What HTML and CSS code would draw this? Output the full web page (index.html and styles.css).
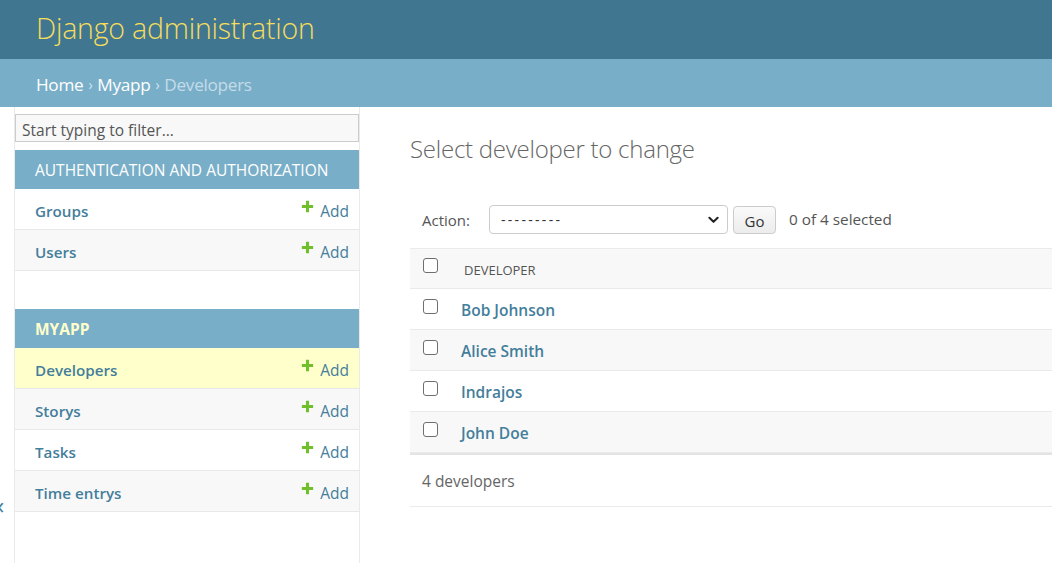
FILE: index.html
```html
<!DOCTYPE html>
<html lang="en">
<head>
<meta charset="utf-8">
<title>Select developer to change | Django site admin</title>
<link rel="stylesheet" href="styles.css">
</head>
<body>
<header class="header">
  <h1 class="site-name">Django administration</h1>
</header>
<nav class="breadcrumbs">
  <a href="#" class="crumb">Home</a><span class="sep">›</span><a href="#" class="crumb">Myapp</a><span class="sep">›</span><span class="current">Developers</span>
</nav>
<div class="main">
  <div class="toggle"><span class="toggle-glyph">‹</span></div>
  <aside class="sidebar">
    <input class="nav-filter" type="search" placeholder="Start typing to filter...">
    <section class="module">
      <div class="caption">Authentication and Authorization</div>
      <div class="row"><a href="#" class="model">Groups</a><a href="#" class="add"><svg class="plus" viewBox="0 0 12 12"><path d="M4.6 0.8h2.8v3.8h3.8v2.8h-3.8v3.8h-2.8v-3.8h-3.8v-2.8h3.8z" fill="#70bf2b"/></svg>Add</a></div>
      <div class="row alt"><a href="#" class="model">Users</a><a href="#" class="add"><svg class="plus" viewBox="0 0 12 12"><path d="M4.6 0.8h2.8v3.8h3.8v2.8h-3.8v3.8h-2.8v-3.8h-3.8v-2.8h3.8z" fill="#70bf2b"/></svg>Add</a></div>
    </section>
    <section class="module">
      <div class="caption current-app">Myapp</div>
      <div class="row current"><a href="#" class="model">Developers</a><a href="#" class="add"><svg class="plus" viewBox="0 0 12 12"><path d="M4.6 0.8h2.8v3.8h3.8v2.8h-3.8v3.8h-2.8v-3.8h-3.8v-2.8h3.8z" fill="#70bf2b"/></svg>Add</a></div>
      <div class="row alt"><a href="#" class="model">Storys</a><a href="#" class="add"><svg class="plus" viewBox="0 0 12 12"><path d="M4.6 0.8h2.8v3.8h3.8v2.8h-3.8v3.8h-2.8v-3.8h-3.8v-2.8h3.8z" fill="#70bf2b"/></svg>Add</a></div>
      <div class="row"><a href="#" class="model">Tasks</a><a href="#" class="add"><svg class="plus" viewBox="0 0 12 12"><path d="M4.6 0.8h2.8v3.8h3.8v2.8h-3.8v3.8h-2.8v-3.8h-3.8v-2.8h3.8z" fill="#70bf2b"/></svg>Add</a></div>
      <div class="row alt"><a href="#" class="model">Time entrys</a><a href="#" class="add"><svg class="plus" viewBox="0 0 12 12"><path d="M4.6 0.8h2.8v3.8h3.8v2.8h-3.8v3.8h-2.8v-3.8h-3.8v-2.8h3.8z" fill="#70bf2b"/></svg>Add</a></div>
    </section>
  </aside>
  <main class="content">
    <h2 class="title">Select developer to change</h2>
    <div class="actions">
      <span class="label">Action:</span>
      <div class="select">
        <span class="select-value">---------</span>
        <svg class="chev" viewBox="0 0 12 8"><path d="M1.5 1.5l4.5 4.5 4.5-4.5" fill="none" stroke="#222" stroke-width="2.2" stroke-linecap="round" stroke-linejoin="round"/></svg>
      </div>
      <button class="go" type="button">Go</button>
      <span class="counter">0 of 4 selected</span>
    </div>
    <div class="table">
      <div class="trow thead"><span class="cb"></span><span class="th">Developer</span></div>
      <div class="trow"><span class="cb"></span><a href="#" class="name">Bob Johnson</a></div>
      <div class="trow alt"><span class="cb"></span><a href="#" class="name">Alice Smith</a></div>
      <div class="trow"><span class="cb"></span><a href="#" class="name">Indrajos</a></div>
      <div class="trow alt"><span class="cb"></span><a href="#" class="name">John Doe</a></div>
    </div>
    <p class="paginator">4 developers</p>
  </main>
</div>
</body>
</html>
```
FILE: styles.css
```css
* { box-sizing: border-box; }
html, body { margin: 0; padding: 0; }
body {
  font-family: "Open Sans", "Noto Sans", "Liberation Sans", sans-serif;
  color: #333;
  background: #fff;
  font-size: 14px;
  overflow: hidden;
  height: 563px;
}
a { text-decoration: none; }

.header {
  height: 59px;
  background: #417690;
  display: flex;
  align-items: center;
  padding: 0 36px;
}
.site-name {
  margin: 0;
  font-size: 28.5px;
  font-weight: 300;
  color: #f5dd5d;
  letter-spacing: -0.2px;
  line-height: 1;
  padding-bottom: 2px;
}

.breadcrumbs {
  height: 48px;
  background: #79aec8;
  display: flex;
  align-items: center;
  padding: 2px 36px 0 36px;
  font-size: 17.2px;
  letter-spacing: -0.3px;
}
.crumb { color: #fff; }
.sep { color: #d4e6f0; margin: 0 5px; font-size: 14px; }
.current { color: #c4dce8; }

.main {
  display: flex;
  height: 456px;
}
.toggle {
  width: 15px;
  flex: none;
  border-right: 1px solid #eaeaea;
  position: relative;
  overflow: hidden;
}
.toggle-glyph {
  position: absolute;
  left: -3px;
  top: 386px;
  font-size: 24px;
  font-weight: 400;
  color: #447e9b;
  line-height: 1;
}
.sidebar {
  width: 345px;
  flex: none;
  border-right: 1px solid #eaeaea;
  padding-top: 7px;
}
.nav-filter {
  display: block;
  width: 344px;
  height: 28px;
  margin: 0 0 8px;
  border: 1px solid #ccc;
  background: #f8f8f8;
  font-family: inherit;
  font-size: 15.5px;
  padding: 3px 6px 0;
  color: #333;
  outline: none;
}
.nav-filter::placeholder { color: #555; }
.module { margin-bottom: 38px; }
.caption {
  height: 39px;
  background: #79aec8;
  color: #fff;
  text-transform: uppercase;
  font-size: 15.5px;
  display: flex;
  align-items: center;
  padding-left: 20px;
  padding-top: 1px;
}
.current-app { color: #ffc; font-weight: 700; }
.row {
  height: 41px;
  border-bottom: 1px solid #e8e8e8;
  display: flex;
  align-items: center;
  justify-content: space-between;
  padding: 3px 10px 0 20px;
  background: #fff;
}
.row.alt { background: #f8f8f8; }
.row.current { background: #ffc; }
.model {
  color: #447e9b;
  font-weight: 600;
  font-size: 15.2px;
  letter-spacing: 0;
}
.add {
  color: #447e9b;
  font-size: 15.5px;
  display: flex;
  align-items: center;
}
.plus {
  width: 13px;
  height: 13px;
  margin-right: 6px;
  position: relative;
  top: -4px;
}

.content {
  flex: 1;
  padding: 0 0 0 50px;
  min-width: 0;
}
.title {
  margin: 25px 0 0;
  font-size: 24px;
  font-weight: 300;
  color: #666;
  line-height: 34px;
  letter-spacing: -0.25px;
}
.actions {
  display: flex;
  align-items: center;
  height: 29px;
  margin-top: 39px;
  margin-bottom: 14px;
  padding-left: 12px;
  color: #555;
  font-size: 15px;
}
.label { width: 67px; }
.select {
  width: 239px;
  height: 29px;
  border: 1px solid #ccc;
  border-radius: 4px;
  display: flex;
  align-items: center;
  justify-content: space-between;
  padding: 0 8px 0 11px;
  color: #333;
  font-size: 14px;
}
.select-value { letter-spacing: 2.3px; }
.chev { width: 11px; height: 8px; }
.go {
  margin-left: 5px;
  width: 43px;
  height: 28px;
  border: 1px solid #ccc;
  border-radius: 4px;
  background: linear-gradient(#fafafa, #ececec);
  font-family: inherit;
  font-size: 15px;
  color: #333;
  padding: 2px 0 0;
}
.counter { margin-left: 13px; color: #555; position: relative; top: -1px; font-size: 15.3px; }

.table { border-top: 1px solid #eaeaea; }
.trow {
  height: 41px;
  border-bottom: 1px solid #eaeaea;
  display: flex;
  align-items: center;
  padding-left: 13px;
  padding-top: 2px;
  background: #fff;
}
.trow.alt { background: #f8f8f8; }
.thead { background: #f8f8f8; height: 40px; }
.cb {
  width: 15px;
  height: 15px;
  border: 1.5px solid #6f6f6f;
  border-radius: 3px;
  background: #fff;
  flex: none;
  position: relative;
  top: -4px;
}
.th {
  margin-left: 26px;
  font-size: 13px;
  color: #555;
  text-transform: uppercase;
  font-weight: 500;
  position: relative;
  top: 0;
}
.name {
  margin-left: 23px;
  color: #447e9b;
  font-weight: 600;
  font-size: 15.5px;
  letter-spacing: 0;
}
.paginator {
  margin: 0;
  border-top: 2px solid #e4e4e4;
  border-bottom: 1px solid #eaeaea;
  height: 54px;
  display: flex;
  align-items: center;
  padding-left: 12px;
  color: #666;
  font-size: 15.5px;
}
```
